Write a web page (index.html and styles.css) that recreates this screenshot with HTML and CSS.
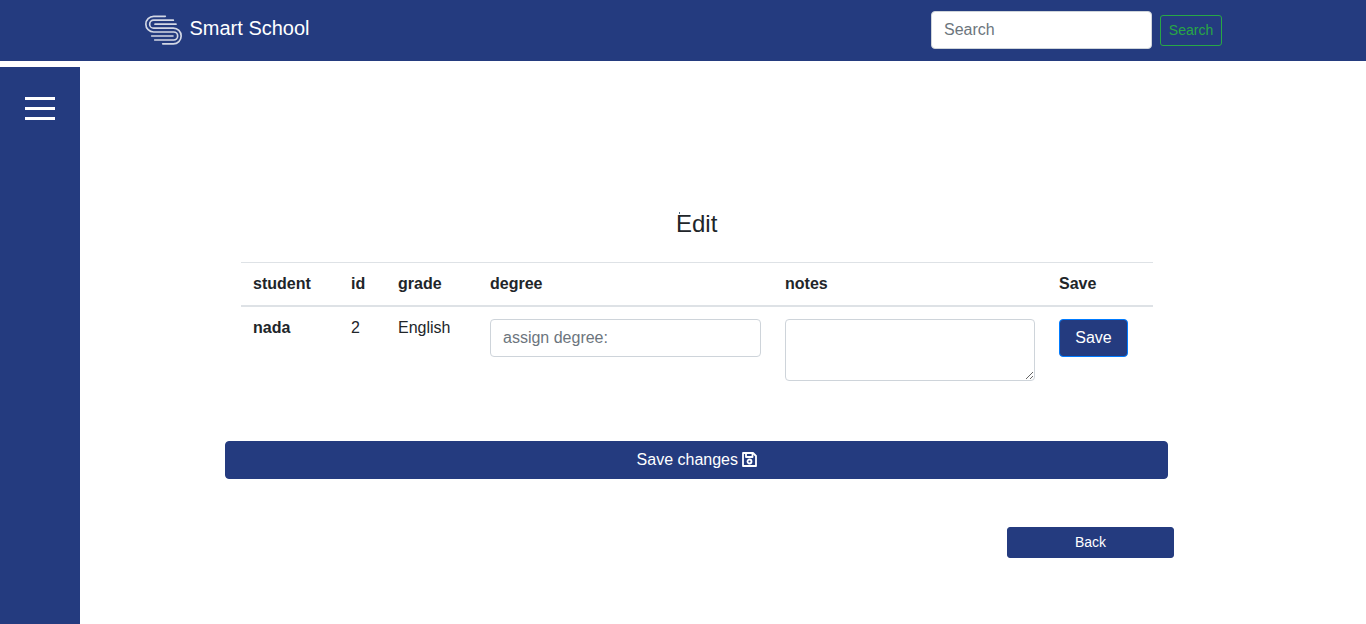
FILE: index.html
```html
<!DOCTYPE html>
<html lang="en">
<head>
<meta charset="utf-8">
<title>Smart School</title>
<link rel="stylesheet" href="styles.css">
</head>
<body>
<header class="navbar">
  <a class="brand">
    <svg class="logo" viewBox="30 31 111 90" fill="none" stroke="#d3d8e5" stroke-width="5" stroke-linecap="round">
      <path d="M91 35H56a23.5 23.5 0 0 0 0 47H116a12 12 0 0 1 0 24H59"/>
      <path d="M115 46.5H56a12 12 0 0 0 0 24H115a23.5 23.5 0 0 1 0 47H83"/>
      <path d="M60 58.5H123M50 94H114"/>
    </svg>
    <span class="brand-name">Smart School</span>
  </a>
  <form class="search">
    <input class="control search-input" type="text" placeholder="Search">
    <button class="btn btn-search" type="button">Search</button>
  </form>
</header>
<div class="page">
  <aside class="sidebar">
    <div class="burger"><span class="bar"></span><span class="bar"></span><span class="bar"></span></div>
  </aside>
  <main class="content">
    <h1 class="title">Edit<span class="tick"></span></h1>
    <table class="table">
      <thead>
        <tr><th class="c-student">student</th><th class="c-id">id</th><th class="c-grade">grade</th><th class="c-degree">degree</th><th class="c-notes">notes</th><th class="c-save">Save</th></tr>
      </thead>
      <tbody>
        <tr>
          <th>nada</th><td>2</td><td>English</td>
          <td><input class="control" type="text" placeholder="assign degree:"></td>
          <td><textarea class="control notes"></textarea></td>
          <td><button class="btn btn-save" type="button">Save</button></td>
        </tr>
      </tbody>
    </table>
    <button class="btn btn-wide" type="button">Save changes
      <svg class="floppy" viewBox="0 0 15 15" fill="none" stroke="#fff" stroke-width="1.8" stroke-linejoin="round">
        <path d="M1 1H11L14 4V14H1Z"/>
        <path d="M4 1.5V5H10.5V1.5"/>
        <circle cx="7.5" cy="9.5" r="2"/>
      </svg>
    </button>
    <button class="btn btn-back" type="button">Back</button>
  </main>
</div>
</body>
</html>
```
FILE: styles.css
```css
* { box-sizing: border-box; }
body {
  margin: 0;
  height: 624px;
  overflow: hidden;
  display: flex;
  flex-direction: column;
  gap: 6px;
  background: #fff;
  color: #212529;
  font-family: "Liberation Sans", Arial, sans-serif;
  font-size: 16px;
}
.navbar {
  height: 61px;
  flex: none;
  padding: 0 144px 0 145px;
  display: flex;
  justify-content: space-between;
  align-items: center;
  background: #243b7f;
}
.brand { display: flex; align-items: center; gap: 7.5px; margin-bottom: 1px; color: #fff; }
.logo { width: 37px; height: 30px; }
.brand-name { font-size: 20px; line-height: 30px; padding-bottom: 5px; }
.search { display: flex; align-items: center; gap: 8px; margin: 0 0 1px; }
.control {
  display: block;
  width: 100%;
  height: 38px;
  padding: 6px 12px;
  border: 1px solid #ced4da;
  border-radius: 4px;
  background: #fff;
  color: #495057;
  font: 16px/24px "Liberation Sans", Arial, sans-serif;
}
.control::placeholder { color: #6c757d; opacity: 1; }
.search-input { width: 221px; }
.btn {
  display: block;
  border: 1px solid #243b7f;
  border-radius: 4px;
  background: #243b7f;
  color: #fff;
  padding: 6px 12px;
  font: 16px/24px "Liberation Sans", Arial, sans-serif;
}
.btn-search {
  width: 62px;
  height: 31px;
  padding: 4px 0;
  border-color: #28a745;
  border-radius: 3px;
  color: #28a745;
  font-size: 14px;
  line-height: 21px;
}
.page { flex: 1; display: flex; }
.sidebar { width: 80px; padding: 30px 25px; background: #243b7f; }
.burger { display: flex; flex-direction: column; gap: 7px; }
.bar { height: 3px; background: #fff; }
.content { width: 943px; margin-left: 145px; padding-top: 142px; }
.title {
  position: relative;
  width: 42px;
  margin: 0 0 24px 451px;
  font-size: 24px;
  font-weight: 400;
  line-height: 29px;
}
.tick {
  position: absolute;
  left: 3px;
  top: 3px;
  width: 1px;
  height: 2px;
  background: #4b6f86;
}
.table {
  width: 912px;
  margin: 0 0 48px 16px;
  table-layout: fixed;
  border-spacing: 0;
  text-align: left;
}
.table th, .table td { padding: 12px; vertical-align: top; }
.table thead th { border-top: 1px solid #dee2e6; border-bottom: 2px solid #dee2e6; }
.c-student { width: 98px; }
.c-id { width: 47px; }
.c-grade { width: 92px; }
.c-degree { width: 295px; }
.c-notes { width: 274px; }
.c-save { width: 106px; }
.notes { height: 62px; resize: vertical; }
.btn-save { width: 69px; height: 38px; padding: 6px 0; border-color: #007bff; }
.btn-wide { width: 943px; height: 38px; padding-left: 13px; }
.floppy { width: 15px; height: 15px; vertical-align: -2px; }
.btn-back {
  width: 167px;
  height: 31px;
  margin: 48px 0 0 782px;
  padding: 4px 8px;
  border-radius: 3px;
  font-size: 14px;
  line-height: 21px;
}
```
